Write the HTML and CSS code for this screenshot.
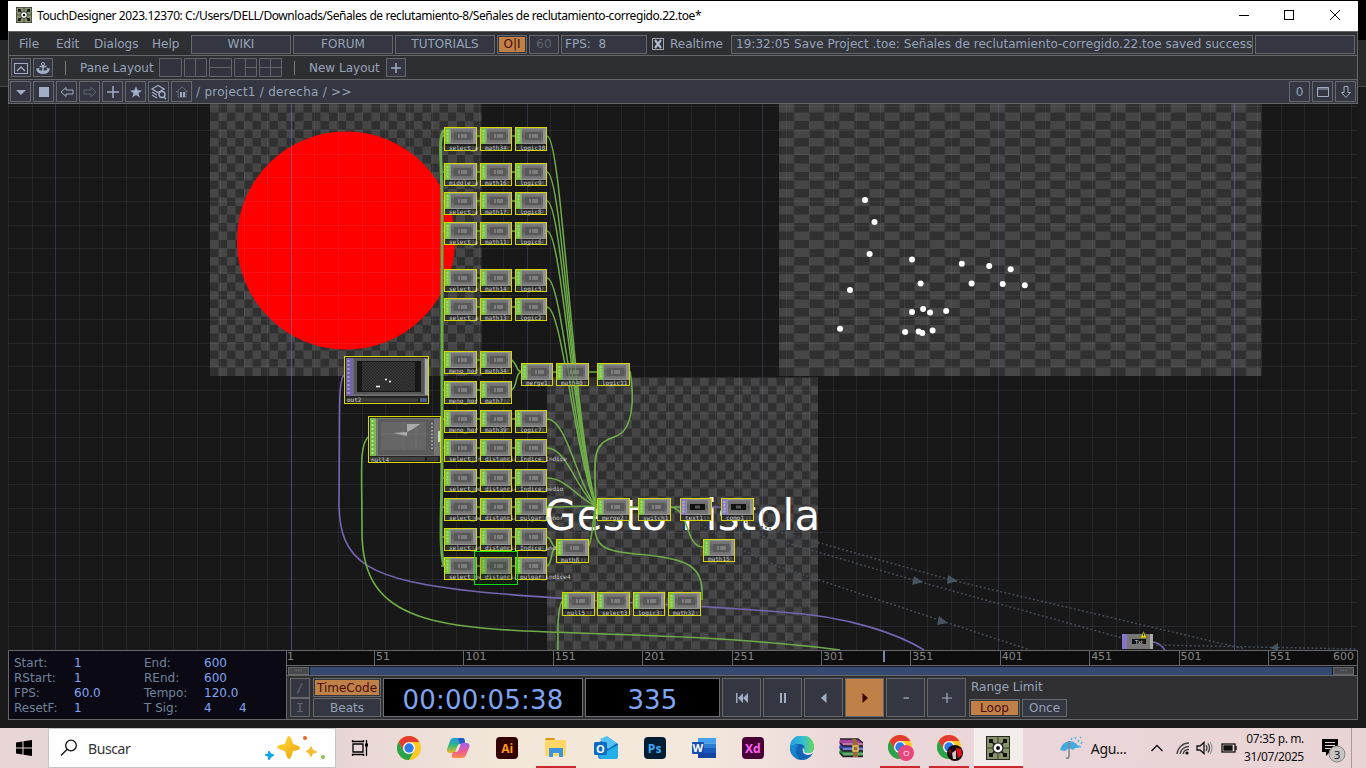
FILE: index.html
```html
<!DOCTYPE html>
<html lang="es">
<head>
<meta charset="utf-8">
<title>TouchDesigner</title>
<link rel="stylesheet" href="styles.css">
</head>
<body>
<svg width="0" height="0" class="defs">
  <symbol id="td" viewBox="0 0 24 24"><rect x=".5" y=".5" width="23" height="23" fill="#87936a" stroke="#26291d"/><path d="M12 0V24M0 12H24" stroke="#343a26"/><path d="M4 4L20 20M20 4L4 20" stroke="#16180f" stroke-width="1.6"/><g fill="#111"><rect x="3" y="3" width="4" height="4"/><rect x="17" y="3" width="4" height="4"/><rect x="3" y="17" width="4" height="4"/><rect x="17" y="17" width="4" height="4"/></g><circle cx="12" cy="12" r="5" fill="#fff" stroke="#222" stroke-width="1.2"/><circle cx="12" cy="12" r="2" fill="#111"/></symbol>
  <symbol id="chrome" viewBox="0 0 24 24"><circle cx="12" cy="12" r="12" fill="#fdc924"/><path d="M1.6 6A12 12 0 0 1 22.4 6H12L6.8 15Z" fill="#e33b2e"/><path d="M1.6 6L6.8 15L12 17.8L17.2 15L12 24A12 12 0 0 1 1.6 6" fill="#2ba24c"/><circle cx="12" cy="12" r="6" fill="#fff"/><circle cx="12" cy="12" r="4.7" fill="#2d7be8"/></symbol>
</svg>
<div class="window">
  <header class="titlebar">
    <svg class="app-icon"><use href="#td"/></svg>
    <span class="title">TouchDesigner 2023.12370: C:/Users/DELL/Downloads/Señales de reclutamiento-8/Señales de reclutamiento-corregido.22.toe*</span>
    <svg class="winbtns" width="104" height="12" fill="none" stroke="#000"><path d="M1 6.5H11"/><rect x="46.500" y="1.500" width="9" height="9"/><path d="M92 1L102 11M102 1L92 11"/></svg>
  </header>
  <nav class="menubar">
    <span class="m-file">File</span><span class="m-edit">Edit</span><span class="m-dialogs">Dialogs</span><span class="m-help">Help</span>
    <div class="boxes">
      <div class="box w100">WIKI</div><div class="box w100">FORUM</div><div class="box w100">TUTORIALS</div>
      <div class="box w30 on">O|I</div><div class="box w30 dim">60</div><div class="box fps">FPS:&nbsp; 8</div>
      <div class="realtime"><i class="check"><svg width="10" height="10"><path d="M2 1L8 9M8 1L2 9" stroke="#aeb9cd" stroke-width="2.200"/></svg></i>Realtime</div>
      <div class="box message"><span>19:32:05 Save Project .toe: Señales de reclutamiento-corregido.22.toe saved success</span></div>
      <div class="box w100"></div>
    </div>
  </nav>
  <div class="panebar">
    <div class="box sq"><svg width="14" height="12" fill="none" stroke="#a0adc4"><rect x=".5" y="1.500" width="13" height="10"/><path d="M3 9L7 5L11 9" stroke-width="1.300"/></svg></div>
    <div class="box sq"><svg width="14" height="12"><path d="M7 3V10M3.500 4.500H10.500" stroke="#a0adc4" stroke-width="1.600" fill="none"/><path d="M0 6.500L3.500 6L3 8Q7 9.500 11 8L10.500 6L14 6.500Q13 12 7 12Q1 12 0 6.500" fill="#a0adc4"/><circle cx="7" cy="2" r="1.500" fill="none" stroke="#a0adc4"/></svg></div>
    <i class="sep s1"></i><span class="panelabel">Pane Layout</span>
    <svg class="layouts" width="124" height="20" fill="#31343c" stroke="#62646a"><path d="M.5.500h22v18H.5zM25.500.500h22v18h-22zM50.500.500h22v18h-22zM75.500.500h22v18h-22zM100.500.500h22v18h-22z"/><path fill="none" d="M36.500 1v17M51 9.500h21M86.500 1v17M87 9.500h10M111.500 1v17M101 9.500h21"/></svg>
    <i class="sep s2"></i><span class="newlabel">New Layout</span>
    <div class="box sq"><svg width="12" height="12"><path d="M6 1V11M1 6H11" stroke="#a0adc4" stroke-width="1.500"/></svg></div>
  </div>
  <div class="pathbar">
    <div class="box pb"><svg width="12" height="12"><path d="M1 4H11L6 9Z" fill="#a0adc4"/></svg></div>
    <div class="box pb"><svg width="12" height="12"><path d="M1 1H11V11H1Z" fill="#a0adc4"/></svg></div>
    <div class="box pb"><svg width="14" height="12" fill="none" stroke="#a0adc4"><path d="M1 6L6 1.500V4H13V8H6V10.500Z"/></svg></div>
    <div class="box pb"><svg width="14" height="12" fill="none" stroke="#626874"><path d="M13 6L8 1.500V4H1V8H8V10.500Z"/></svg></div>
    <div class="box pb"><svg width="12" height="12"><path d="M6 0V12M0 6H12" stroke="#a0adc4" stroke-width="1.500"/></svg></div>
    <div class="box pb"><svg width="12" height="12"><path d="M6 0L7.600 4.200L12 4.500L8.500 7.300L9.800 11.500L6 9L2.200 11.500L3.500 7.300L0 4.500L4.400 4.200Z" fill="#a0adc4"/></svg></div>
    <div class="box pb"><svg width="16" height="16" fill="none" stroke="#a0adc4" stroke-width="1.400"><path d="M1 5L7 1.500L13 5L7 8.500ZM1 8L6 11M1 11L6 14"/><circle cx="11" cy="10.500" r="3" fill="#343741"/><path d="M13 13L15 15"/></svg></div>
    <div class="box pb"><svg width="14" height="12"><path d="M1 6L7 1L13 6M3 5V11H11V5" stroke="#777e8d" fill="none" stroke-dasharray="2 .6"/><path d="M5 6H7V11H5ZM8 6H10V11H8Z" fill="#a0adc4"/></svg></div>
    <span class="path">/ project1 / derecha / &gt;&gt;</span>
    <div class="right">
      <div class="box pb">0</div>
      <div class="box pb"><svg width="12" height="12" fill="none" stroke="#a0adc4"><path d="M.5 1.500H11.500V10.500H.5ZM0 3H12"/></svg></div>
      <div class="box pb"><svg width="12" height="14" fill="none" stroke="#a0adc4"><path d="M4 1.500H8V7.500H10.500L6 12.500L1.500 7.500H4Z"/></svg></div>
    </div>
  </div>
  <svg class="network" id="net" viewBox="8 104 1350 546"></svg>
  <section class="timeline">
    <div class="stats">
      <span>Start:</span><b>1</b><span>End:</span><b>600</b><b></b>
      <span>RStart:</span><b>1</b><span>REnd:</span><b>600</b><b></b>
      <span>FPS:</span><b>60.0</b><span>Tempo:</span><b>120.0</b><b></b>
      <span>ResetF:</span><b>1</b><span>T Sig:</span><b class="sig">4</b><b class="sig">4</b>
    </div>
    <div class="transport">
      <div class="ruler"><span>1</span><span>51</span><span>101</span><span>151</span><span>201</span><span>251</span><span>301</span><span>351</span><span>401</span><span>451</span><span>501</span><span>551</span><em>600</em><i class="playhead"></i></div>
      <div class="slider"><i class="grip">...</i><i class="bar"></i><i class="grip">...</i></div>
      <div class="controls">
        <div class="stack tiny"><div class="box">/</div><div class="box">I</div></div>
        <div class="stack modes"><div class="box on">TimeCode</div><div class="box">Beats</div></div>
        <div class="display code">00:00:05:38</div>
        <div class="display frame">335</div>
        <div class="box btn"><svg width="14" height="12" fill="#a0adc4"><path d="M1 1H2.500V11H1ZM8 1V11L3 6ZM13 1V11L8 6Z"/></svg></div>
        <div class="box btn"><svg width="8" height="12" fill="#a0adc4"><path d="M1 1H3V11H1ZM5 1H7V11H5Z"/></svg></div>
        <div class="box btn"><svg width="8" height="12" fill="#a0adc4"><path d="M6.500 1V11L1 6Z"/></svg></div>
        <div class="box btn play"><svg width="8" height="12" fill="#3c0505"><path d="M1.500 1V11L7 6Z"/></svg></div>
        <div class="box btn"><svg width="12" height="12"><path d="M3.500 6H9" stroke="#a0adc4" stroke-width="1.300"/></svg></div>
        <div class="box btn"><svg width="12" height="12"><path d="M6 1V11M1 6H11" stroke="#a0adc4" stroke-width="1.200"/></svg></div>
        <div class="range"><span>Range Limit</span><div><div class="box on loop">Loop</div><div class="box once">Once</div></div></div>
      </div>
    </div>
  </section>
</div>
<footer class="taskbar">
  <div class="start"><svg width="16" height="16"><path d="M0 2.500L6.500 1.500V7.500H0ZM7.500 1.300L16 0V7.500H7.500ZM0 8.500H6.500V14.500L0 13.500ZM7.500 8.500H16V16L7.500 14.700Z"/></svg></div>
  <div class="search">
    <svg width="18" height="18" fill="none" stroke="#111" stroke-width="1.300"><circle cx="11" cy="6.500" r="5.300"/><path d="M7.200 10.300L1 16.500"/></svg>
    <span>Buscar</span>
    <svg class="sparkle" width="62" height="26"><defs><linearGradient id="gold" x2="1" y2="1"><stop stop-color="#ffdc3c"/><stop offset="1" stop-color="#eda20c"/></linearGradient></defs><path d="M24 1Q26 1 28 9Q35 11 35 13Q35 15 28 16Q26 24 24 24Q22 24 20 16Q12 14 12 12Q12 10 20 9Q22 1 24 1Z" fill="url(#gold)"/><path d="M46 11Q47 11 48 15Q52 16 52 17Q52 18 48 18.500Q47 22 46 22Q45 22 44 18.500Q41 17 41 16Q41 15 44 14.500Z" fill="#f3bd32"/><path d="M4 16L6 19L9 20L6 22L4 25L3 21L0 20L3 19Z" fill="#12a5e5" stroke="#12a5e5"/><circle cx="40" cy="3" r="2" fill="#ee6426"/><circle cx="58" cy="22" r="2" fill="#89c740"/></svg>
  </div>
  <div class="task"><svg width="18" height="18" fill="none" stroke="#000" stroke-width="1.300"><path d="M2 5H12V13H2ZM1.500 1V2.500H12.500V1M1.500 17V15.500H12.500V17M15.500 1V17"/><path d="M14 4.500H17V7.500H14Z" fill="#000" stroke="none"/></svg></div>
  <div class="task"><svg width="24" height="24"><use href="#chrome"/></svg></div>
  <div class="task"><svg width="24" height="24"><defs><linearGradient id="cp1" x1="0" y1="0" x2="0" y2="1"><stop stop-color="#1c94e8"/><stop offset=".5" stop-color="#35b87e"/><stop offset="1" stop-color="#f5ba22"/></linearGradient><linearGradient id="cp2" x1="0" y1="0" x2="0" y2="1"><stop stop-color="#a15ded"/><stop offset=".55" stop-color="#ef5c9a"/><stop offset="1" stop-color="#fa8b45"/></linearGradient></defs><path d="M8 2H17Q19 2 18 5L17 8H14Q12 8 11 11L9 17H4Q0 17 1 13L4 5Q5 2 8 2" fill="url(#cp1)"/><path d="M12 2H16Q19 2 19 6L18 8H14Z" fill="#2457c5"/><path d="M15 7H20Q25 7 23 12L20 19Q19 22 16 22H8Q5 22 6 18L7 16H10Q12 16 13 13Z" fill="url(#cp2)"/><path d="M14 8.500L11 16H10L13 8.500Z" fill="#f3e2d8"/></svg></div>
  <div class="task"><div class="adobe ai">Ai</div></div>
  <div class="task open"><svg width="24" height="24"><path d="M1 4Q1 2 3 2H10L12 5H1Z" fill="#dc9811"/><path d="M1 4H21Q22 4 22 6V20H1Z" fill="#ffd766"/><path d="M5 12H19V21H15V17H9V21H5Z" fill="#3b94dc"/></svg></div>
  <div class="task"><svg width="26" height="24"><path d="M5 7L14 1L25 8V20Q25 23 22 23H8Q5 23 5 20Z" fill="#116dbd"/><path d="M7 3L14 0L24 7L15 13Z" fill="#54c2f2"/><path d="M5 20L25 9V20Q25 23 22 23H8Z" fill="#24afe9"/><rect x="1" y="6" width="13" height="13" rx="1.500" fill="#0b6bc2"/><text x="3" y="17" class="glyph">O</text></svg></div>
  <div class="task"><div class="adobe ps">Ps</div></div>
  <div class="task"><svg width="26" height="24"><path d="M7 2H25V7.500H7Z" fill="#45a1ec"/><path d="M7 7.500H25V12H7Z" fill="#2c7ed5"/><path d="M7 12H25V17H7Z" fill="#195bbe"/><path d="M7 17H25V22H7Z" fill="#1543a0"/><rect x="1" y="6" width="12" height="12" rx="1" fill="#174fae"/><text x="1.600" y="16" class="glyph">W</text></svg></div>
  <div class="task"><div class="adobe xd">Xd</div></div>
  <div class="task"><svg width="24" height="24"><defs><linearGradient id="edge"><stop stop-color="#249be1"/><stop offset=".55" stop-color="#35bfd0"/><stop offset="1" stop-color="#6ad854"/></linearGradient></defs><circle cx="12" cy="12" r="12" fill="#1264b4"/><path d="M0 11A12 12 0 0 1 24 11Q24 17 18 17Q13 17 14 14Q16 8 9 8Q2 8 0 13Z" fill="url(#edge)"/><path d="M13 11Q11 18 18 19Q21 19 23 17L24 16V13Q23 17 18 17Q13 17 14 14Z" fill="#f1e7dd"/><path d="M8 9Q3 16 9 23A12 12 0 0 1 0 12Q2 8 8 9" fill="#1887d0"/></svg></div>
  <div class="task"><svg width="26" height="24"><path d="M2 3H20L25 7V10H5L1 7Z" fill="#a34499"/><path d="M2 8L5 10H25V15H5L1 12Z" fill="#3550bb"/><path d="M2 13L5 15H25V20H5L1 17Z" fill="#2c8741"/><path d="M5 8H25M5 13H25M5 18H25" stroke="#e2ddd2" stroke-width=".7"/><path d="M2 3H20L25 7M2 7L5 10H25M2 12L5 15H25M2 17L5 20.500H25" fill="none" stroke="#292027" stroke-width="1.300"/><path d="M14 3H18L20 9V21H15V9Z" fill="#9a6938"/><path d="M15 10H20V15H15Z" fill="none" stroke="#ebc45c" stroke-width="1.500"/></svg></div>
  <div class="task open"><svg width="28" height="26"><use href="#chrome" width="24" height="24" x="2"/><circle cx="20" cy="18" r="8" fill="#e9457d"/><text x="17.200" y="21" class="mini">O</text></svg></div>
  <div class="task open"><svg width="28" height="26"><use href="#chrome" width="24" height="24" x="2"/><circle cx="20" cy="18" r="8" fill="#17090a"/><path d="M21 13L26 14L27 20L23 23Z" fill="#e3171b"/><path d="M17 18L21 15V24H18Z" fill="#d4c7c7"/><path d="M13 16L16 14L16 20Z" fill="#80161c"/></svg></div>
  <div class="task open active"><svg width="24" height="24"><use href="#td"/></svg></div>
  <div class="weather"><svg width="24" height="24"><path d="M1 14Q3 6 11 5Q18 6 20 12L16 12L14 14L10 12L6 15Z" fill="#43a9df"/><path d="M10 5V20Q10 23 7 22" fill="none" stroke="#7e8998" stroke-width="1.600"/><path d="M13 2L12 4M17 1L16 3M20 4L19 6M23 6L22 8M22 1L21 2M19 10L22 11" stroke="#4eb5ea" stroke-width="1.500"/></svg><span>Agu...</span></div>
  <div class="tray"><svg width="90" height="20" fill="none" stroke="#111" stroke-width="1.300"><path d="M1.500 13L7 7.500L12.500 13"/><g stroke="#444"><path d="M27 16A12 12 0 0 1 39 5M30 16A9 9 0 0 1 39 8.500M33 16A6 6 0 0 1 39 11.500"/></g><circle cx="37" cy="15" r="1.600" fill="#111" stroke="none"/><path d="M47 8H50L54 4.500V15.500L50 12H47Z"/><path d="M56 7Q58 10 56 13M58 5.500Q61 10 58 14.500" stroke="#444"/><path d="M60 4Q64 10 60 16" stroke="#999"/><rect x="72" y="6" width="13" height="8"/><path d="M74 8H82V12H74Z" fill="#111"/><path d="M86 8V12" stroke-width="1.500"/></svg></div>
  <div class="clock"><span>07:35 p. m.</span><span>31/07/2025</span></div>
  <div class="notes"><svg width="28" height="28"><path d="M1 3H17V16H9L5 20V16H1Z" fill="#000"/><path d="M4 6.500H14M4 9.500H14M4 12.500H10" stroke="#e8d6d6"/><circle cx="16" cy="18" r="8" fill="#c9c4c4" stroke="#8c8585"/><text x="13" y="22.500" class="count">3</text></svg></div>
  <i class="desk"></i>
</footer>
<script src="network.js"></script>
</body>
</html>
```
FILE: styles.css
```css
* { box-sizing: border-box; }
body { margin: 0; width: 1366px; height: 768px; overflow: hidden; display: flex; flex-direction: column; font: 12px "DejaVu Sans", sans-serif; color: #97a3b9; background: linear-gradient(#000 0 40px, #29292a 40px 86px, #48484a 86px 87px, #191919 87px); }
svg { display: block; flex: none; }
i { font-style: normal; }
.defs { display: none; }
.window { margin: 1px 8px 8px; height: 719px; flex: none; display: flex; flex-direction: column; background: #2e2f33; }
.titlebar { height: 30px; flex: none; background: #fff; display: flex; align-items: center; padding: 0 16px 2px 8px; color: #000; font: 12px "Noto Sans", sans-serif; }
.app-icon { width: 16px; height: 16px; margin-right: 5px; }
.title { width: 700px; white-space: nowrap; letter-spacing: -.42px; }
.winbtns { margin-left: auto; }
.menubar, .panebar, .pathbar { height: 24px; flex: none; display: flex; align-items: center; border: 1px solid #66676b; border-bottom: 0; white-space: nowrap; }
.menubar { padding: 1px 1px 0 10px; }
.m-file { width: 37px; } .m-edit { width: 38px; } .m-dialogs { width: 58px; } .m-help { width: 39px; }
.boxes { display: flex; gap: 2px; align-items: center; }
.box { border: 1px solid #67686c; background: #343741; display: flex; align-items: center; justify-content: center; overflow: hidden; }
.boxes .box { height: 19px; }
.w100 { width: 100px; } .w30 { width: 30px; }
.box.on { background: #c08148; color: #4b0b08; box-shadow: inset 0 0 0 1px #34363d; }
.dim { color: #60636c; }
.fps { width: 86px; justify-content: flex-start; padding-left: 3px; }
.realtime { width: 80px; padding-left: 3px; display: flex; align-items: center; gap: 6px; }
.check { width: 12px; height: 12px; border: 1px solid #a0a5ae; }
.boxes .message { width: 522px; justify-content: flex-start; padding-left: 4px; background: #33353b; }
.message span { letter-spacing: .03px; }
.panebar { padding-left: 2px; gap: 2px; }
.sq { width: 20px; height: 19px; }
.sep { width: 1px; height: 14px; background: #777a81; }
.s1 { margin-left: 10px; } .panelabel { margin-left: 12px; width: 77px; }
.s2 { margin-left: 9px; } .newlabel { margin-left: 12px; width: 75px; }
.pathbar { height: 25px; border-bottom: 1px solid #66676b; background: #343741; padding: 0 1px; gap: 2px; }
.pathbar .pb:first-child { margin-left: 0; }
.pb { width: 21px; height: 21px; }
.path { margin-left: 2px; letter-spacing: .26px; }
.right { margin-left: auto; display: flex; gap: 2px; }
.network { width: 1350px; height: 546px; background: #181818; }
.timeline { height: 70px; flex: none; display: flex; }
.stats { width: 278px; border: 1px solid #66676b; border-right: 0; background: #0b0914; display: grid; grid-template-columns: 60px 70px 60px 35px 30px; grid-template-rows: repeat(4, 15.200px); align-items: center; padding: 4px 0 0 5px; color: #71839a; }
.stats b { font-weight: 400; color: #80a5f3; }
.transport { width: 1072px; border: 1px solid #66676b; display: flex; flex-direction: column; }
.ruler { height: 14px; display: grid; grid-template-columns: 87px repeat(10, 89.400px) 1fr; position: relative; background: #0d0d0d; color: #858585; font-size: 11px; line-height: 11px; }
.ruler span { padding-left: 1px; border-left: 1px solid #66676b; }
.ruler span:first-child { padding-left: 0; border: 0; }
.ruler em { position: absolute; right: 3px; font-style: normal; }
.playhead { position: absolute; left: 596px; top: 0; width: 2px; height: 11px; background: #7688a8; }
.slider { height: 11px; border-top: 1px solid #66676b; border-bottom: 1px solid #66676b; background: #17181b; display: flex; align-items: center; gap: 1px; padding: 0 3px 0 1px; }
.grip { width: 21px; height: 8px; background: #48494c; border: 1px solid #66676b; color: #8b8d92; font-size: 8px; line-height: 2px; text-align: center; }
.bar { flex: 1; height: 8px; background: #354a70; }
.controls { flex: 1; display: flex; gap: 2px; padding: 2px 3px; background: #303032; }
.stack { display: flex; flex-direction: column; }
.tiny { width: 20px; margin-right: 1px; } .tiny .box { height: 19.500px; color: #65686f; font-size: 13px; font-family: "DejaVu Sans Mono", monospace; }
.modes { width: 68px; gap: 1px; } .modes .box { height: 19px; }
.display { height: 39px; border: 1px solid #6c6d71; background: #000; color: #80a5f3; font-size: 26px; line-height: 43px; text-align: center; letter-spacing: .2px; }
.code { width: 200px; } .frame { width: 135px; }
.btn { width: 39px; height: 39px; }
.box.play { background: #c08148; }
.range { margin-left: 1px; line-height: 19px; } .range > span { padding-left: 2px; } .range div { display: flex; gap: 2px; }
.range .box { height: 18px; margin-top: 2px; } .loop { width: 51px; } .once { width: 45px; }
.taskbar { height: 40px; flex: none; display: flex; color: #111; font-family: "Noto Sans", sans-serif; background: linear-gradient(90deg, #e8d5d5 0, #e7d5d6 340px, #f3e7d9 500px, #f4e8dc 700px, #ead7da 860px, #e9d4d5 1366px); }
.taskbar > * { flex: none; }
.start { width: 48px; display: flex; align-items: center; justify-content: center; }
.search { width: 287.500px; background: #fff; border: 1px solid #c7c4c4; display: flex; align-items: center; padding-left: 11px; font-size: 14px; color: #333; }
.search span { margin-left: 10px; width: 177px; letter-spacing: -.4px; }
.task { width: 49.100px; display: flex; align-items: center; justify-content: center; position: relative; }
.open::after { content: ""; position: absolute; bottom: 0; left: 4.500px; right: 4.500px; height: 2px; background: #cc292c; }
.active { background: #f3edec; } .active::after { left: 0; right: 0; }
.adobe { width: 22px; height: 22px; border-radius: 4px; font: bold 12px "Open Sans", sans-serif; display: flex; align-items: center; justify-content: center; }
.ai { background: #330000; color: #ff9a16; } .ps { background: #001d34; color: #38a9f7; } .xd { background: #470137; color: #ff61f6; }
.glyph { font: bold 11px "Open Sans", sans-serif; fill: #fff; }
.mini { font: 8px "Open Sans", sans-serif; fill: #fff; }
.count { font: 11px "Noto Sans", sans-serif; fill: #111; }
.weather { margin-left: 36px; width: 91px; display: flex; align-items: center; gap: 8px; font-size: 14px; letter-spacing: -.3px; }
.tray { width: 94px; display: flex; align-items: center; }
.clock { width: 60px; display: flex; flex-direction: column; align-items: flex-end; padding-top: 2px; line-height: 18px; font-size: 12px; letter-spacing: -.4px; white-space: nowrap; }
.notes { margin-left: 17px; padding-top: 8px; }
.desk { margin-left: 2px; border-left: 1px solid #a99a9a; }
.label { font: 6px "DejaVu Sans Mono", monospace; fill: #c8c8c8; }
.gesture { font: 41.800px "DejaVu Sans", sans-serif; fill: #fff; }
.txt { font: 5px "DejaVu Sans", sans-serif; fill: #eee; }
```
FILE: network.js
```javascript
const out = [];
const add = s => out.push(s);
const rect = (x, y, w, h, fill, extra = '') => add(`<rect x="${x}" y="${y}" width="${w}" height="${h}" fill="${fill}" ${extra}/>`);
const wire = (d, c = '#6fac49', w = 1.6) => add(`<path d="${d}" fill="none" stroke="${c}" stroke-width="${w}"/>`);

// Transparency checkerboards behind the previews
add(`<defs>
<pattern id="wide" x="779" y="104" width="30.140" height="17" patternUnits="userSpaceOnUse"><rect width="31" height="17" fill="#303030"/><path d="M0 0h15.070v8.500H0zM15.070 8.500h15.070V17h-15.070z" fill="#464646"/></pattern>
<pattern id="left" x="210" y="104" width="17" height="17" patternUnits="userSpaceOnUse"><rect width="17" height="17" fill="#303030"/><path d="M0 0h8.500v8.500H0zM8.500 8.500H17V17H8.500z" fill="#464646"/></pattern>
<pattern id="mid" x="547" y="377.500" width="17" height="17" patternUnits="userSpaceOnUse"><rect width="17" height="17" fill="#303030"/><path d="M0 0h8.500v8.500H0zM8.500 8.500H17V17H8.500z" fill="#464646"/></pattern>
<pattern id="fine" width="3" height="3" patternUnits="userSpaceOnUse"><rect width="3" height="3" fill="#242424"/><path d="M0 0h1.500v1.500H0zM1.500 1.500H3V3H1.500z" fill="#3c3c3c"/></pattern>
<linearGradient id="body" x2="0" y2="1"><stop stop-color="#7a7a7a"/><stop offset=".5" stop-color="#606060"/><stop offset="1" stop-color="#7c7c7c"/></linearGradient></defs>`);
rect(210, 104, 271.5, 272, 'url(#left)');
rect(779, 104, 482.5, 272, 'url(#wide)');
rect(547, 377.5, 271, 273, 'url(#mid)');
add('<circle cx="346" cy="240.500" r="109" fill="#f00"/>');
[[865,200],[874.5,222],[869.6,254],[912,259.5],[961.8,263.7],[989.2,266],[1010.7,269.2],[920.6,283.5],[971.6,283.5],[1002.7,284],[1024.8,285.2],[850,290],[912,312],[923.1,309],[930,312.6],[946.2,311],[840,328.8],[905.1,332],[918.6,331.5],[922.3,333],[932.6,330.6]]
  .forEach(p => add(`<circle cx="${p[0]}" cy="${p[1]}" r="3" fill="#fff"/>`));
add('<text class="gesture" x="544" y="530" textLength="276">Gesto Pistola</text>');

// Grid
for (let i = -42; i < 16; i++) {
  const x = Math.floor(998.4 + i * 23.57) + .5;
  const color = i === -30 || i === 10 ? '#7272d088' : i % 10 === 0 ? '#7272c848' : '#a0a0c81c';
  wire(`M${x} 104V650`, color, 1);
}
for (let i = -5; i < 20; i++) {
  const y = Math.floor(201.4 + i * 23.62) + .5;
  wire(`M8 ${y}H1358`, '#a0a0c81c', 1);
}

// Long cables
const purple = '#7665b2';
wire('M344 375C338 380 340 410 339 500C338 565 370 580 480 592C590 602 700 605 780 612C850 616 900 635 924 650', purple);
wire('M368 437C359 447 362 470 362 530C361 650 480 624 720 639C780 643 810 646 840 650');
wire('M444 130C437 140 443 160 442 230V450C442 510 439 550 444 566', '#6fac49', 3);
wire('M630 371C634 395 635 431 614 437C592 445 594 455 596 506');
wire('M596 506C592 545 597 550 635 554C690 558 704 566 702 600');
wire('M562 601C557 612 558 630 558 650');
wire('M588 547C593 540 592 520 596 506');
wire('M671 507C690 510 685 547 703 547');
wire('M547 537C554 540 550 547 557 547M547 566C553 564 550 547 557 547');
wire('M512 360C518 365 516 372 522 372M512 390C518 385 515 372 522 372M553 372H597M596 507H680');
wire('M712 507H722M1152 642Q1159 642 1165 650', purple);
const dots = 'stroke-dasharray="1.800 2.400"';
['M745 522L951 580L1245 649','M735 528L917 581L1122 638','M671 510C700 520 730 548 780 567L942 621L1030 650','M1152 645L1357 649']
  .forEach(d => add(`<path d="${d}" fill="none" stroke="#48515d" stroke-width="1.500" ${dots}/>`));
add('<path d="M948 575L958 581L947 584ZM914 576L923 582L912 585ZM939 616L948 623L937 625ZM1270 648L1278 643V651Z" fill="#465361"/>');

const node = (x, y, name, w = 32, h = 23, kind = 'green') => {
  const c = kind === 'green' ? '#78c046' : '#8a76c8';
  rect(x, y, w, h, '#202020');
  rect(x + 1, y + 1, w - 2, 16, '#929292');
  rect(x + 1, y + 1, 5, 16, c);
  add(`<path d="M${x + 3.5} ${y + 3}v13" stroke="#c4f09c" stroke-width="2" stroke-dasharray="2 1.200" opacity=".6"/>`);
  rect(x + 7, y + 2, w - 11, 14, 'url(#body)');
  if (kind === 'green') {
    rect(x + 10, y + 5, w - 16, 8, '#585858');
    add(`<path d="M${x + 15} ${y + 7}v4m3 -4v4m2 -4v4m2 -4v4" stroke="#929292" stroke-width="1.300"/>`);
  } else {
    rect(x + 10, y + 6, 15, 6, '#111');
    rect(x + 15, y + 7.5, 5, 3, '#555');
  }
  rect(x + 1, y + h - 5, w - 2, 4, '#343434');
  rect(x + .5, y + .5, w - 1, h - 1, 'none', 'stroke="#d8d800"');
  add(`<text class="label" x="${x + 5}" y="${y + h - 1.5}">${name}</text><path d="M${x + w - 7} ${y + h - 5}v4m3 -4v4" stroke="#888" stroke-width=".6"/>`);
};

const rows = [
  [127,'select_a','math34','logic10'],[163,'middle_a','math16','logic9'],[192,'select_a','math17','logic8'],[222,'select_a','math11','logic6'],
  [269,'select_a','math14','logic5'],[298,'select_a','math13','logic2'],[351,'meno_hor','math34'],[381,'meno_hor','math7'],
  [410,'meno_hor','math39','logic7'],[439,'select_Ind','distancia','Indice_Indice'],[469,'select_med','distancia','Indice_medio'],
  [498,'select_men','distancia','pulgar_menor'],[528,'select_anu','distancia','Indice_anular'],[557,'select_men','distancia','pulgar_indice4']
];
const cols = [444, 480, 515];
rows.forEach(([y, ...names]) => {
  const t = y + 9;
  if (names.length === 3 && y < 520) wire(`M547 ${t}C${y < 400 ? 562 : 567} ${t} ${570 + y / 60} ${t + (506 - t) * .75} 596 506`, '#6fac49', 1.5);
  wire(`M441 ${t}H${cols[names.length - 1]}`);
  names.forEach((n, i) => node(cols[i], y, n, i ? 32 : 33, y === 127 ? 24 : 23));
});
node(521, 363, 'merge1'); node(556, 363, 'math40', 33); node(597, 363, 'logic11', 33);
node(597, 498, 'merge2', 33); node(638, 498, 'switch1', 33); node(680, 498, 'text1', 32, 23, 'purple'); node(721, 498, 'comp1', 33, 23, 'purple');
node(556, 539, 'math8', 33, 24); node(703, 539, 'math15');
node(562, 592, 'null5', 33, 24); node(597, 592, 'select3', 33, 24); node(633, 592, 'logic3', 32, 24); node(668, 592, 'math32', 33, 24);
// Cables that pass in front of the nodes
wire('M567 363L571 387M570 363L575 387M575 363L577 387', '#6fac4988', 1.3);
rect(474.5, 551.5, 43, 33, '#003c0022', 'stroke="#0de10d"');

// Large viewers
rect(344.5, 356.5, 84, 47, '#242424');
rect(346, 358, 82, 38, '#6b6b6b'); rect(346, 358, 7, 38, '#7664a9');
add('<path d="M348.500 360V394" stroke="#a99ad8" stroke-width="2" stroke-dasharray="2 2"/>');
rect(354, 358, 70, 36, '#555'); rect(425, 359, 3, 36, '#aaa');
rect(357, 361, 64, 31, '#171717'); rect(362, 362, 53, 29, 'url(#fine)');
add('<path d="M376 386.500h4m5-7h2m2 2h2" stroke="#fff" stroke-width="1.300"/>');
rect(346, 398, 72, 4, '#3c3c3c'); rect(420, 398, 7, 4, '#4b5d83');
rect(344.5, 356.5, 84, 47, 'none', 'stroke="#d8d800"');
add('<text class="label" x="347" y="402">out2</text>');
rect(368.5, 416.5, 72, 46, '#222'); rect(370, 418, 70, 38, '#747474'); rect(370, 418, 6, 38, '#78ba4b'); rect(378, 419, 56, 36, '#5b5b5b'); rect(381, 422, 45, 28, '#666');
add('<path d="M372.500 420V455" stroke="#b4e58e" stroke-width="2" stroke-dasharray="2 2"/><path d="M403 422V450M416 422V450M381 434H426" stroke="#777" stroke-width=".7"/><path d="M407 424H420L413 429L407 432ZM393 433L407 432V436Z" fill="#aaa"/><path d="M432 423V450" stroke="#eee" stroke-dasharray="1.500 2"/><path d="M439 431V442" stroke="#dfffce" stroke-width="1.500"/>');
rect(370, 457, 55, 4, '#414141'); rect(427, 457, 11, 4, '#3b3b3b');
rect(368.5, 416.5, 72, 46, 'none', 'stroke="#d8d800"');
add('<text class="label" x="371" y="461.500">null4</text>');
rect(1122, 634, 31, 15, '#777'); rect(1122, 634, 5, 15, '#8676c9'); rect(1150, 634, 3, 15, '#aaa'); rect(1132, 639, 14, 5, '#111');
add('<text class="txt" x="1135" y="643.500">Txt</text><path d="M1143.500 631.500L1147 638H1140Z" fill="#e5dc00" stroke="#5b5700" stroke-width=".6"/><path d="M1143.500 633.500V636" stroke="#222"/>');
document.getElementById('net').innerHTML = out.join('');
```
